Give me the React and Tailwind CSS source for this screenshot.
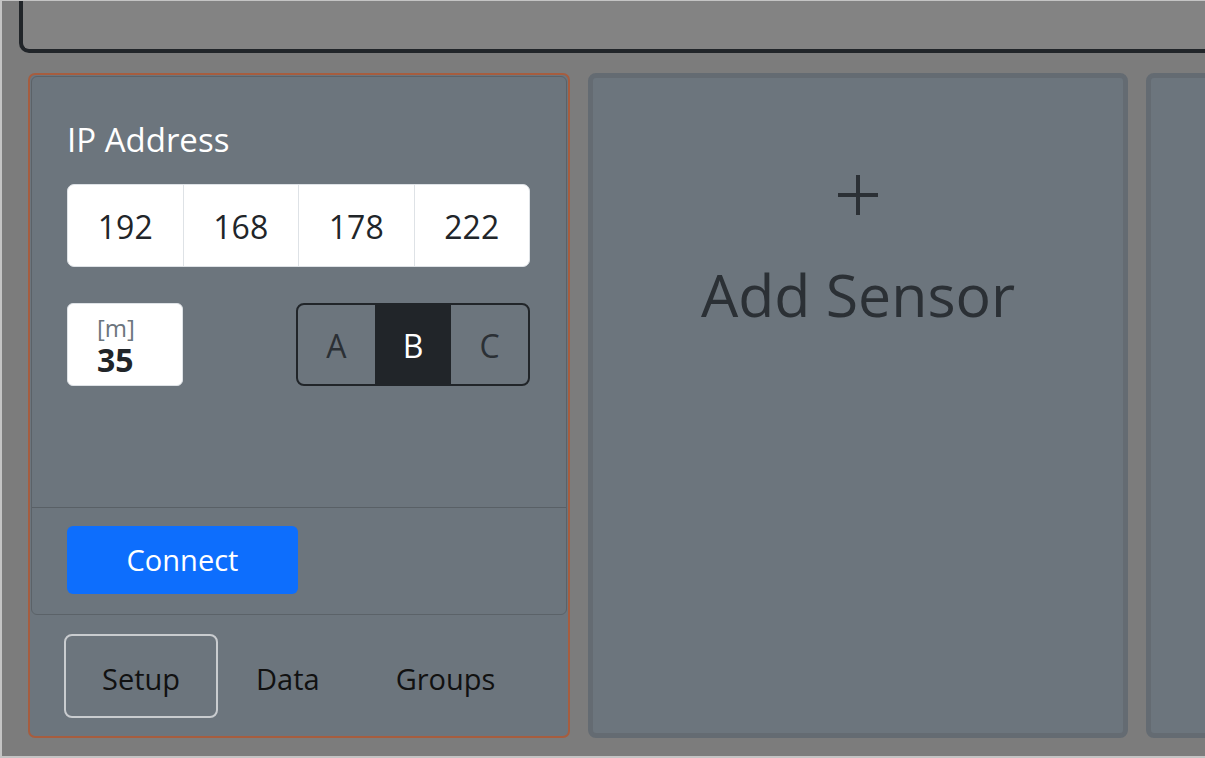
import { useState } from 'react';

const font = { fontFamily: '"Open Sans", "Noto Sans", sans-serif' };

export default function App() {
  const [octets] = useState(['192', '168', '178', '222']);
  const [mode, setMode] = useState('B');
  const [tab, setTab] = useState('Setup');

  return (
    <div style={font} className="w-[1205px] h-[758px] overflow-hidden bg-[#7c7c7c] border-t border-l-2 border-b-2 border-[#c4c4c4] flex flex-col">
      {/* top bar */}
      <div className="ml-[17px] h-[52px] shrink-0 bg-[#838383] border-l-4 border-b-4 border-[#212529] rounded-bl-[10px]" />

      <div className="flex gap-[18px] mt-[20px] ml-[26px] h-[665px]">
        {/* device card */}
        <div className="w-[542px] shrink-0 flex flex-col bg-[#6c757d] border-2 border-[#a65d3f] rounded-[7px]">
          <div className="flex flex-col h-[539px] mx-px mt-px border border-[#5b6268] rounded-[6px]">
            <div className="flex-1 px-[35px] pt-[44px]">
              <h3 className="text-[33px] leading-[38px] text-white">IP Address</h3>

              <div className="mt-[25px] flex h-[83px] w-[463px] bg-white rounded-[7px] border border-[#dee2e6] overflow-hidden">
                {octets.map((o, i) => (
                  <div key={i}
                    className={'flex-1 flex items-center justify-center text-[32px] text-[#212529] pt-[2px] ' + (i > 0 ? 'border-l border-[#dee2e6]' : '')}>
                    {o}
                  </div>
                ))}
              </div>

              <div className="mt-[36px] flex items-center justify-between w-[463px]">
                <div className="w-[116px] h-[83px] bg-white rounded-[6px] border border-[#dee2e6] flex flex-col gap-[3px] pl-[29px] pt-[11px]">
                  <span className="text-[24px] leading-[26px] text-[#6c757d]">[m]</span>
                  <span className="text-[32px] leading-[32px] font-bold text-[#212529]">35</span>
                </div>

                <div className="flex h-[83px] w-[234px] border-2 border-[#212529] rounded-[8px] overflow-hidden">
                  {['A', 'B', 'C'].map((m) => (
                    <button key={m} onClick={() => setMode(m)}
                      className={'flex-1 flex items-center justify-center text-[32px] pt-[2px] ' +
                        (mode === m ? 'bg-[#212529] text-white' : 'text-[#2b3035]')}>
                      {m}
                    </button>
                  ))}
                </div>
              </div>
            </div>

            <div className="h-[107px] border-t border-[#596066] px-[35px] pt-[18px]">
              <button className="w-[231px] h-[68px] bg-[#0d6efd] rounded-[6px] text-white text-[29px]">
                Connect
              </button>
            </div>
          </div>

          <div className="flex items-center px-[34px] pt-[19px]">
            {['Setup', 'Data', 'Groups'].map((t) => (
              <button key={t} onClick={() => setTab(t)}
                className={'h-[84px] px-[36px] rounded-[8px] text-[29px] leading-none pt-[4px] text-[#111] border-2 ' +
                  (tab === t ? 'border-[#c9cccf]' : 'border-transparent')}>
                {t}
              </button>
            ))}
          </div>
        </div>

        {/* add sensor */}
        <div className="w-[540px] shrink-0 bg-[#6c757d] border-[5px] border-[#646b72] rounded-[8px] flex flex-col items-center pt-[96px] text-[#2b3035]">
          <svg width="42" height="42" viewBox="0 0 42 42">
            <path d="M21 1v40M1 21h40" stroke="#2b3035" strokeWidth="4" />
          </svg>
          <div className="mt-[44px] text-[59px] leading-[68px]">Add Sensor</div>
        </div>

        <div className="w-[540px] shrink-0 bg-[#6c757d] border-[5px] border-[#646b72] rounded-[8px]" />
      </div>
    </div>
  );
}
